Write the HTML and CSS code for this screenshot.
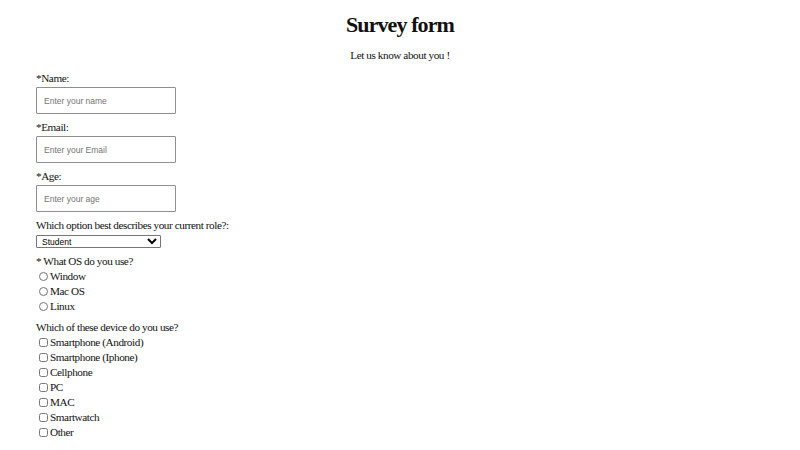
FILE: index.html
```html
<!DOCTYPE html>
<html lang="en">
<head>
<meta charset="utf-8">
<title>Survey form</title>
<link rel="stylesheet" href="styles.css">
</head>
<body>
<h1 class="title">Survey form</h1>
<p class="description">Let us know about you !</p>
<form class="survey">
  <div class="group">
    <label class="label" for="name">*Name:</label>
    <input class="field" id="name" type="text" placeholder="Enter your name">
  </div>
  <div class="group">
    <label class="label" for="email">*Email:</label>
    <input class="field" id="email" type="email" placeholder="Enter your Email">
  </div>
  <div class="group">
    <label class="label" for="age">*Age:</label>
    <input class="field" id="age" type="number" placeholder="Enter your age">
  </div>
  <div class="group">
    <label class="label" for="role">Which option best describes your current role?:</label>
    <select class="dropdown" id="role">
      <option>Student</option>
      <option>Full Time Job</option>
      <option>Full Time Learner</option>
      <option>Other</option>
    </select>
  </div>
  <div class="group">
    <div class="label">* What OS do you use?</div>
    <label class="choice"><input class="radio" type="radio" name="os">Window</label>
    <label class="choice"><input class="radio" type="radio" name="os">Mac OS</label>
    <label class="choice"><input class="radio" type="radio" name="os">Linux</label>
  </div>
  <div class="group">
    <div class="label">Which of these device do you use?</div>
    <label class="choice"><input class="check" type="checkbox">Smartphone (Android)</label>
    <label class="choice"><input class="check" type="checkbox">Smartphone (Iphone)</label>
    <label class="choice"><input class="check" type="checkbox">Cellphone</label>
    <label class="choice"><input class="check" type="checkbox">PC</label>
    <label class="choice"><input class="check" type="checkbox">MAC</label>
    <label class="choice"><input class="check" type="checkbox">Smartwatch</label>
    <label class="choice"><input class="check" type="checkbox">Other</label>
  </div>
</form>
</body>
</html>
```
FILE: styles.css
```css
html, body {
  margin: 0;
  padding: 0;
  background: #ffffff;
}
body {
  font-family: "Liberation Serif", "Times New Roman", serif;
  font-size: 11.2px;
  letter-spacing: -0.42px;
  line-height: 15px;
  color: #111;
}
.title {
  margin: 0;
  padding-top: 10px;
  text-align: center;
  font-size: 22px;
  letter-spacing: -0.9px;
  line-height: 30px;
  font-weight: bold;
}
.description {
  margin: 8px 0 0;
  text-align: center;
  line-height: 15px;
}
.survey {
  display: flex;
  flex-direction: column;
  gap: 6px;
  padding: 8px 36px 0;
}
.group {
  display: flex;
  flex-direction: column;
  align-items: flex-start;
}
.label {
  display: block;
  height: 15px;
}
.field {
  box-sizing: border-box;
  width: 140px;
  height: 27px;
  margin: 1px 0 0;
  padding: 0 7px;
  border: 1px solid #8f8f8f;
  border-radius: 1px;
  font-family: "Liberation Sans", Arial, sans-serif;
  font-size: 8.5px;
  letter-spacing: 0;
  background: #fff;
}
.field::placeholder {
  color: #757575;
}
.dropdown {
  box-sizing: border-box;
  width: 125px;
  height: 13px;
  margin: 2px 0 0;
  padding: 0 1px;
  border: 1px solid #767676;
  border-radius: 1px;
  font-family: "Liberation Sans", Arial, sans-serif;
  font-size: 8.5px;
  letter-spacing: 0;
  background: #fff;
  color: #000;
}
.choice {
  display: flex;
  align-items: center;
  height: 15px;
}
.radio, .check {
  width: 9px;
  height: 9px;
  margin: 0 2px 0 3px;
}
```
